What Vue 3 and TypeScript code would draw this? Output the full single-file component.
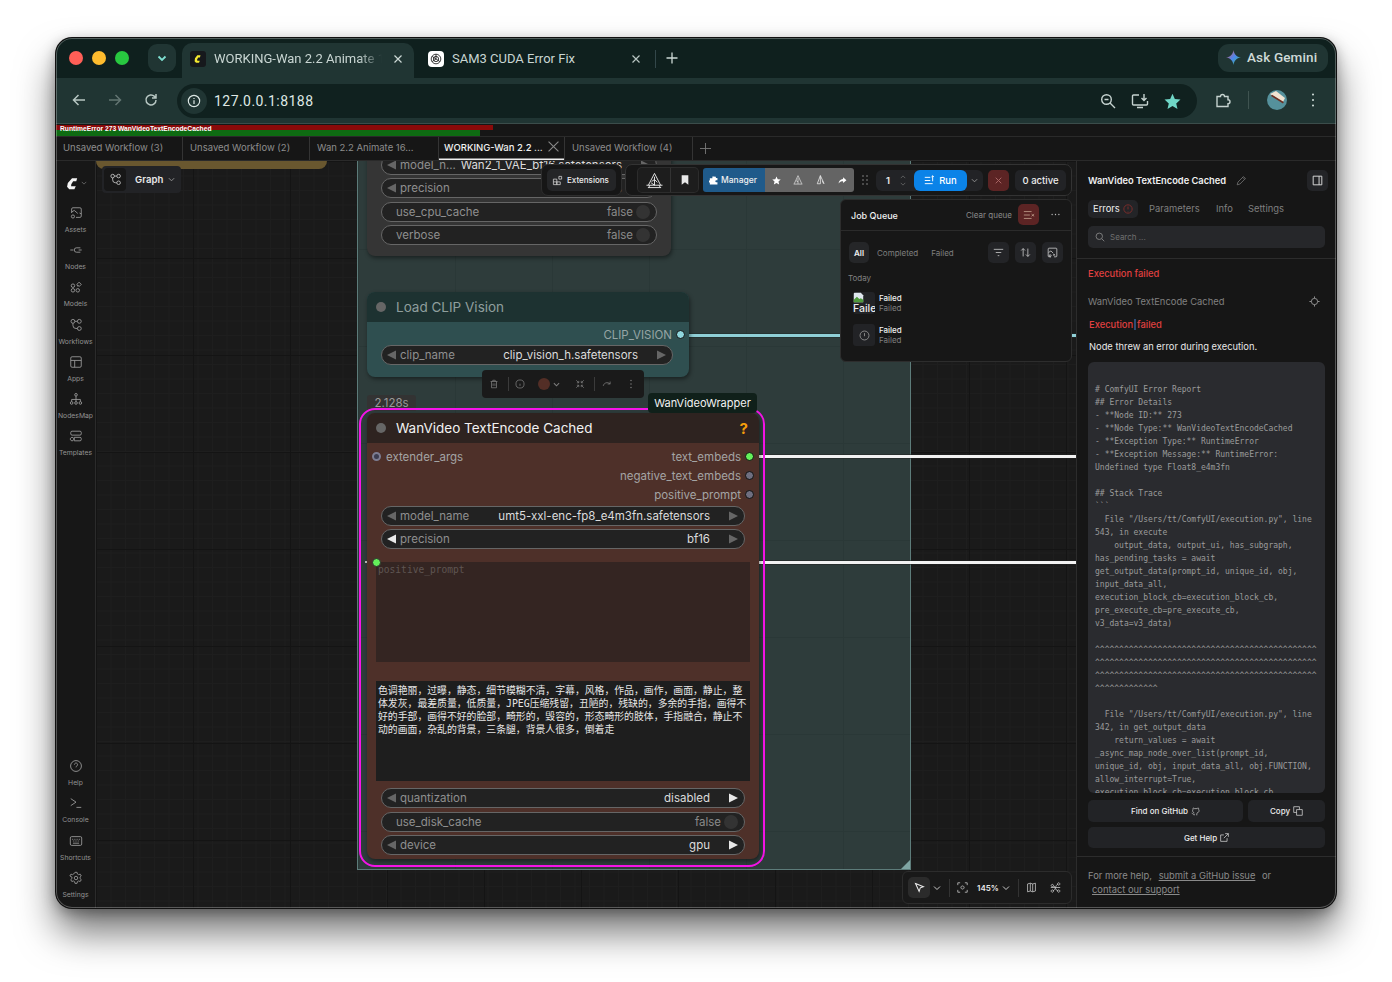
<script setup lang="ts">
interface Widget { label: string; value?: string; kind?: 'toggle'; lit?: 'l' | 'r' | 'both'; }
const circle = (x: number, y: number, r: number) => `M${x - r} ${y}a${r} ${r} 0 1 0 ${2 * r} 0a${r} ${r} 0 1 0 ${-2 * r} 0`;
const topItems = [
  { label: 'Assets', d: 'M3 8V3.5A1.5 1.5 0 0 1 4.5 2h8A1.5 1.5 0 0 1 14 3.5v8a1.5 1.5 0 0 1-1.500 1.500H8M3 7l3-2 4 3.500M14 9l-2-1M11 5.200h.01' + circle(4.5, 12, 1.8) },
  { label: 'Nodes', d: 'M1.500 8h3.500M11 8h3.500M13 5.500H8.500a2.500 2.500 0 0 0 0 5H13' },
  { label: 'Models', d: circle(4.5, 6.5, 2) + circle(4.5, 11.8, 2) + circle(10, 11.8, 2) + 'M11.500 2.500l2.500 2.500-2.500 2.500L9 5z' + circle(10, 6.5, .5) },
  { label: 'Workflows', d: circle(4.5, 3.8, 2.2) + circle(11.8, 3.8, 2.2) + circle(11.8, 12, 2.2) + 'M6.700 3.800h2.900M4.500 6v2.500a3.500 3.500 0 0 0 3.500 3.500h1.600' },
  { label: 'Apps', d: 'M3.500 2h9A1.500 1.500 0 0 1 14 3.500v9a1.500 1.500 0 0 1-1.500 1.500h-9A1.500 1.500 0 0 1 2 12.500v-9A1.500 1.500 0 0 1 3.500 2zM2 6.200h12M6.500 6.200V14' },
  { label: 'NodesMap', d: circle(8, 3.2, 1.5) + circle(3, 12.5, 1.5) + circle(8, 12.5, 1.5) + circle(13, 12.5, 1.5) + 'M8 4.700v6.300M3 11V8.500h10V11' },
  { label: 'Templates', d: 'M3.500 2.500h9A1.500 1.500 0 0 1 14 4v1.500A1.500 1.500 0 0 1 12.500 7h-9A1.500 1.500 0 0 1 2 5.500V4a1.500 1.500 0 0 1 1.500-1.500zM6 9.500h6.500A1.500 1.500 0 0 1 14 11v1a1.500 1.500 0 0 1-1.500 1.500H6zM3.500 9.500a2 2 0 1 0 .01 0' },
];
const bottomItems = [
  { label: 'Help', d: circle(8, 8, 6.2) + 'M6.200 6.400a1.800 1.800 0 1 1 2.800 1.500c-.7.500-1 .8-1 1.600M8 11.500h.01' },
  { label: 'Console', d: 'M2 3l6 4-6 4M8.500 13H14' },
  { label: 'Shortcuts', d: 'M3 3h10a1.500 1.500 0 0 1 1.500 1.500v7A1.500 1.500 0 0 1 13 13H3a1.500 1.500 0 0 1-1.500-1.500v-7A1.500 1.500 0 0 1 3 3zM4 5.500v1M6 5.500v1M8 5.500v1M10 5.500v1M12 5.500v1M5 7.500v1M7 7.500v1M9 7.500v1M11 7.500v1M4.500 10.500h7' },
  { label: 'Settings', d: circle(8, 8, 2) + 'M6.800 1.500h2.400l.4 1.900 1.400.8 1.800-.6 1.200 2.100-1.400 1.300v1.600l1.400 1.300-1.200 2.100-1.800-.6-1.400.8-.4 1.900H6.800l-.4-1.900-1.400-.8-1.800.6-1.200-2.100 1.400-1.300V7.000L1 5.700l1.200-2.100 1.800.6 1.400-.8z' },
];
const topNode: Widget[] = [
  { label: 'model_n...', value: 'Wan2_1_VAE_bf16.safetensors' },
  { label: 'precision', value: 's' },
  { label: 'use_cpu_cache', value: 'false', kind: 'toggle' },
  { label: 'verbose', value: 'false', kind: 'toggle' },
];
const encA: Widget[] = [
  { label: 'model_name', value: 'umt5-xxl-enc-fp8_e4m3fn.safetensors' },
  { label: 'precision', value: 'bf16', lit: 'l' },
];
const encB: Widget[] = [
  { label: 'quantization', value: 'disabled', lit: 'r' },
  { label: 'use_disk_cache', value: 'false', kind: 'toggle' },
  { label: 'device', value: 'gpu', lit: 'r' },
];
const negative = [
  '色调艳丽，过曝，静态，细节模糊不清，字幕，风格，作品，画作，画面，静止，整',
  '体发灰，最差质量，低质量，JPEG压缩残留，丑陋的，残缺的，多余的手指，画得不',
  '好的手部，画得不好的脸部，畸形的，毁容的，形态畸形的肢体，手指融合，静止不',
  '动的画面，杂乱的背景，三条腿，背景人很多，倒着走',
];
const wfTabs = ['Unsaved Workflow (3)', 'Unsaved Workflow (2)', 'Wan 2.2 Animate 16...', 'WORKING-Wan 2.2 ...', 'Unsaved Workflow (4)'];
const carets = '^'.repeat(46);
const report = `# ComfyUI Error Report
## Error Details
- **Node ID:** 273
- **Node Type:** WanVideoTextEncodeCached
- **Exception Type:** RuntimeError
- **Exception Message:** RuntimeError:
Undefined type Float8_e4m3fn

## Stack Trace
\`\`\`
  File "/Users/tt/ComfyUI/execution.py", line
543, in execute
    output_data, output_ui, has_subgraph,
has_pending_tasks = await
get_output_data(prompt_id, unique_id, obj,
input_data_all,
execution_block_cb=execution_block_cb,
pre_execute_cb=pre_execute_cb,
v3_data=v3_data)

${carets}
${carets}
${carets}
${'^'.repeat(13)}

  File "/Users/tt/ComfyUI/execution.py", line
342, in get_output_data
    return_values = await
_async_map_node_over_list(prompt_id,
unique_id, obj, input_data_all, obj.FUNCTION,
allow_interrupt=True,
execution_block_cb=execution_block_cb,`;
</script>

<template>
  <div class="page">
    <div class="window">
      <!-- browser tab strip -->
      <header class="strip">
        <div class="lights"><i class="red"></i><i class="yellow"></i><i class="green"></i></div>
        <button class="tabs-menu"><svg viewBox="0 0 12 12" width="12" height="12"><path d="M2.500 4.500L6 8l3.500-3.500" fill="none" stroke="#7fe0d2" stroke-width="1.800"/></svg></button>
        <div class="btab active">
          <span class="fav comfy"><svg viewBox="0 0 16 16" width="16" height="16"><path d="M10.500 4.200H7.300L5 7.300l-.4 2.900L6 11.800h3l.8-2H7.300l-.2-1.300 1.100-1.900h1.700z" fill="#f4e92f"/></svg></span>
          <span class="btitle fade">WORKING-Wan 2.2 Animate 1</span>
          <svg class="bx" viewBox="0 0 10 10" width="10" height="10"><path d="M1.500 1.500l7 7M8.500 1.500l-7 7" stroke="#cdd9d6" stroke-width="1.200"/></svg>
        </div>
        <div class="btab second">
          <span class="fav gpt"><svg viewBox="0 0 16 16" width="14" height="14"><g fill="none" stroke="#222" stroke-width="1"><circle cx="8" cy="8" r="5.500"/><circle cx="8" cy="8" r="3"/><path d="M8 2.500v5.500l4.500 3M3.500 11L8 8M3.500 5l4.500 3"/></g></svg></span>
          <span class="btitle">SAM3 CUDA Error Fix</span>
          <svg class="bx" viewBox="0 0 10 10" width="10" height="10"><path d="M1.500 1.500l7 7M8.500 1.500l-7 7" stroke="#b7c4c1" stroke-width="1.200"/></svg>
        </div>
        <span class="bsep"></span>
        <svg class="bplus" viewBox="0 0 12 12" width="12" height="12"><path d="M6 .5v11M.5 6h11" stroke="#cdd9d6" stroke-width="1.300"/></svg>
        <div class="gemini">
          <svg viewBox="0 0 16 16" width="15" height="15"><defs><linearGradient id="gm" x1="0" y1="0" x2="1" y2="1"><stop offset="0" stop-color="#f0503c"/><stop offset=".5" stop-color="#4d86f0"/><stop offset="1" stop-color="#33c06a"/></linearGradient></defs><path d="M8 0c.6 4.400 3.100 7.300 8 8-4.900.7-7.400 3.600-8 8-.6-4.400-3.100-7.300-8-8 4.900-.7 7.400-3.600 8-8z" fill="url(#gm)"/></svg>
          <span>Ask Gemini</span>
        </div>
      </header>

      <!-- browser toolbar -->
      <div class="toolbar">
        <svg class="nav" viewBox="0 0 16 16"><path d="M14 8H2.500M7.500 3l-5 5 5 5" fill="none" stroke="#b6c6c2" stroke-width="1.500"/></svg>
        <svg class="nav" viewBox="0 0 16 16"><path d="M2 8h11.500M8.500 3l5 5-5 5" fill="none" stroke="#627572" stroke-width="1.500"/></svg>
        <svg class="nav" viewBox="0 0 16 16"><path d="M13 8a5 5 0 1 1-1.500-3.600L13 6M13 2v4H9" fill="none" stroke="#b6c6c2" stroke-width="1.500"/></svg>
        <div class="omni">
          <span class="info"><svg viewBox="0 0 16 16" width="14" height="14"><circle cx="8" cy="8" r="6.500" fill="none" stroke="#dbe6e3" stroke-width="1.300"/><path d="M8 7v4.500M8 4.500v1.200" stroke="#dbe6e3" stroke-width="1.400"/></svg></span>
          <span class="url">127.0.0.1:8188</span>
          <span class="omni-r">
            <svg viewBox="0 0 16 16" width="16" height="16"><circle cx="6.500" cy="6.500" r="4.800" fill="none" stroke="#c5d2cf" stroke-width="1.400"/><path d="M10 10l5 5M4.500 6.500h4" stroke="#c5d2cf" stroke-width="1.400"/></svg>
            <svg viewBox="0 0 18 16" width="18" height="16"><path d="M8 2H2.500A1 1 0 0 0 1.500 3v8a1 1 0 0 0 1 1h13a1 1 0 0 0 1-1V8M6 14.500h6M13 1v6M10.500 5l2.500 2.500L15.500 5" fill="none" stroke="#c5d2cf" stroke-width="1.400"/></svg>
            <svg viewBox="0 0 16 16" width="17" height="17"><path d="M8 .8l2.200 4.900 5.300.5-4 3.600 1.200 5.300L8 12.300l-4.700 2.800 1.200-5.300-4-3.600 5.300-.5z" fill="#6fd6c6"/></svg>
          </span>
        </div>
        <svg class="ext" viewBox="0 0 16 16" width="16" height="16"><path d="M2 4.500h3.500a2 2 0 1 1 4 0H13v3.200a2 2 0 1 1 0 4V14.500H2z" fill="none" stroke="#c5d2cf" stroke-width="1.400"/></svg>
        <span class="tsep"></span>
        <svg class="avatar" viewBox="0 0 20 20" width="20" height="20"><circle cx="10" cy="10" r="10" fill="#55919c"/><path d="M3 4l13 8 2-4L9 1z" fill="#f0e3d2"/><path d="M4 6l12 7.500 .8-1.500L5 4.800z" fill="#6d2f22"/></svg>
        <svg class="dots" viewBox="0 0 4 14" width="4" height="14"><path d="M2 1.500h.01M2 7h.01M2 12.500h.01" stroke="#c5d2cf" stroke-width="2.200" stroke-linecap="round"/></svg>
      </div>

      <!-- progress -->
      <div class="progress">
        <div class="bar-r"></div>
        <div class="bar-g"></div>
        <span class="ptext">RuntimeError 273 WanVideoTextEncodeCached</span>
      </div>

      <!-- workflow tabs -->
      <nav class="wftabs">
        <div v-for="(t, i) in wfTabs" :key="t" class="wftab" :class="{ on: i === 3 }">
          <span>{{ t }}</span>
          <svg v-if="i === 3" viewBox="0 0 10 10" width="11" height="11"><path d="M.5.500l9 9M9.500.500l-9 9" stroke="#888" stroke-width="1"/></svg>
        </div>
        <svg class="wfplus" viewBox="0 0 12 12" width="11" height="11"><path d="M6 0v12M0 6h12" stroke="#777" stroke-width="1"/></svg>
      </nav>

      <div class="main">
        <!-- left rail -->
        <aside class="rail">
          <div class="logo">
            <svg viewBox="0 0 16 16" width="15" height="15"><path d="M13 2.500H7.500L3 7.500 2.200 11.500 4.500 14H10l1.500-3H6.500l.2-2.300L8.700 5.500H12z" fill="#f4f4f4"/></svg>
            <svg viewBox="0 0 8 8" width="6" height="6"><path d="M1 2.500l3 3 3-3" fill="none" stroke="#777" stroke-width="1"/></svg>
          </div>
          <div v-for="it in topItems" :key="it.label" class="ritem">
            <svg viewBox="0 0 16 16" width="14" height="14"><path :d="it.d"/></svg>
            <span>{{ it.label }}</span>
          </div>
          <div class="rspace"></div>
          <div v-for="it in bottomItems" :key="it.label" class="ritem">
            <svg viewBox="0 0 16 16" width="14" height="14"><path :d="it.d"/></svg>
            <span>{{ it.label }}</span>
          </div>
        </aside>

        <!-- canvas -->
        <section class="canvas">
          <div class="ygroup"></div>
          <div class="group"><i class="grip"></i></div>

          <div class="wire teal"></div>
          <div class="wire white w1"></div>
          <div class="wire white w2"></div>

          <!-- cut-off node -->
          <div class="node n-top">
            <div v-for="w in topNode" :key="w.label" class="wg" :class="{ tg: w.kind === 'toggle' }">
              <svg v-if="w.kind !== 'toggle'" class="ar" viewBox="0 0 10 10"><path d="M9 .5v9L0 5z"/></svg>
              <span class="wl">{{ w.label }}</span>
              <span class="wv">{{ w.value }}</span>
              <i v-if="w.kind === 'toggle'" class="knob"></i>
              <svg v-else class="ar" viewBox="0 0 10 10"><path d="M1 .5v9L10 5z"/></svg>
            </div>
          </div>

          <!-- clip vision -->
          <div class="node n-clip">
            <div class="ntitle clip-t"><i class="tdot"></i><span>Load CLIP Vision</span></div>
            <div class="clip-b">
              <div class="slot r"><span>CLIP_VISION</span><i class="pin cv"></i></div>
              <div class="wg">
                <svg class="ar" viewBox="0 0 10 10"><path d="M9 .5v9L0 5z"/></svg>
                <span class="wl">clip_name</span>
                <span class="wv">clip_vision_h.safetensors</span>
                <svg class="ar" viewBox="0 0 10 10"><path d="M1 .5v9L10 5z"/></svg>
              </div>
            </div>
          </div>

          <div class="selbox">
            <svg class="s1" viewBox="0 0 16 16" width="10" height="10"><path d="M2.500 4h11M6 4V2h4v2M4 4v10h8V4M6.500 7v4M9.500 7v4"/></svg>
            <b class="s2"></b>
            <svg class="s3" viewBox="0 0 16 16" width="10" height="10"><path :d="circle(8, 8, 6.500) + 'M8 7.500v3.500M8 5h.01'"/></svg>
            <span class="sw"></span>
            <svg class="chev s4" viewBox="0 0 8 8" width="7" height="7"><path d="M1 2.500l3 3 3-3"/></svg>
            <svg class="s5" viewBox="0 0 16 16" width="10" height="10"><path d="M2 2l4 4M6 3v3H3M14 2l-4 4M10 3v3h3M2 14l4-4M6 13v-3H3M14 14l-4-4M10 13v-3h3"/></svg>
            <b class="s2"></b>
            <svg class="s6" viewBox="0 0 16 16" width="10" height="10"><path d="M2 11c1-5 7-7 11-3M13 4v4H9M5 12h.01"/></svg>
            <svg class="s7" viewBox="0 0 4 14" width="4" height="10"><path d="M2 2h.01M2 7h.01M2 12h.01" stroke-width="2" stroke-linecap="round"/></svg>
          </div>

          <!-- selected node -->
          <div class="time">2.128s</div>
          <div class="magenta"></div>
          <div class="wrapper-tag">WanVideoWrapper</div>
          <div class="node n-enc">
            <div class="ntitle enc-t"><i class="tdot"></i><span>WanVideo TextEncode Cached</span><em>?</em></div>
            <div class="enc-b">
              <div class="slot l"><i class="pin hollow"></i><span>extender_args</span></div>
              <div class="slot r up"><span>text_embeds</span><i class="pin go"></i></div>
              <div class="slot r"><span>negative_text_embeds</span><i class="pin off"></i></div>
              <div class="slot r"><span>positive_prompt</span><i class="pin off"></i></div>
              <div class="wlist">
                <div v-for="w in encA" :key="w.label" class="wg">
                  <svg class="ar" :class="{ lit: w.lit === 'l' }" viewBox="0 0 10 10"><path d="M9 .5v9L0 5z"/></svg>
                  <span class="wl">{{ w.label }}</span>
                  <span class="wv">{{ w.value }}</span>
                  <svg class="ar" viewBox="0 0 10 10"><path d="M1 .5v9L10 5z"/></svg>
                </div>
              </div>
              <div class="ta ta1">
                <i class="pin go tapin"></i><i class="tiny"></i>
                <span class="ph">positive_prompt</span>
              </div>
              <div class="ta ta2"><div v-for="l in negative" :key="l">{{ l }}</div></div>
              <div class="wlist low">
                <div v-for="w in encB" :key="w.label" class="wg" :class="{ tg: w.kind === 'toggle' }">
                  <svg v-if="w.kind !== 'toggle'" class="ar" viewBox="0 0 10 10"><path d="M9 .5v9L0 5z"/></svg>
                  <span class="wl">{{ w.label }}</span>
                  <span class="wv" :class="{ dim: w.kind === 'toggle' }">{{ w.value }}</span>
                  <i v-if="w.kind === 'toggle'" class="knob"></i>
                  <svg v-else class="ar" :class="{ lit: w.lit === 'r' }" viewBox="0 0 10 10"><path d="M1 .5v9L10 5z"/></svg>
                </div>
              </div>
            </div>
          </div>

          <!-- graph pill -->
          <div class="graph">
            <span class="gicon"><svg viewBox="0 0 16 16" width="13" height="13"><path :d="circle(4.5, 3.8, 2.2) + circle(11.8, 3.8, 2.200) + circle(11.8, 12, 2.200) + 'M6.700 3.800h2.900M4.500 6v2.500a3.500 3.500 0 0 0 3.500 3.500h1.600'"/></svg></span>
            <span class="gtxt">Graph</span>
            <svg class="chev" viewBox="0 0 8 8" width="7" height="7"><path d="M1 2.500l3 3 3-3"/></svg>
          </div>

          <!-- top toolbars -->
          <div class="topbars">
            <div class="extbox">
              <span class="extbtn">
                <svg viewBox="0 0 16 16" width="11" height="11"><path d="M2 6h5v8H2zM2 10h5M7 10h5v4H7zM10 2h4v4h-4z"/></svg>
                Extensions
              </span>
            </div>
            <div class="actions">
              <div class="ibtns">
                <span class="ib wide"><svg viewBox="0 0 20 18" width="19" height="17"><path d="M10 1.500L3.500 14M10 1.500L16.500 14M1.500 14h17M10 5v9M7 10l3-2 3 3M6.500 11.500l3.500 2.500M3 16.500h14M5 14l-1 2.500M15 14l1 2.500" fill="none" stroke="#e8e8e8" stroke-width="1"/></svg></span>
                <span class="ib"><svg viewBox="0 0 12 14" width="8" height="10"><path d="M1 0h10v14l-5-3.500L1 14z" fill="#e8e8e8"/></svg></span>
              </div>
              <div class="mgr">
                <svg viewBox="0 0 16 16" width="9" height="9"><path d="M6 1h3.500v2.500a1.500 1.500 0 1 1 2.500 0H15v4h-1.500a1.800 1.800 0 1 0 0 3.500H15V15H1.500v-3.500a1.800 1.800 0 1 1 0-3.500V4H6z" fill="#fff"/></svg>
                Manager
              </div>
              <div class="mgr-more">
                <svg viewBox="0 0 16 16" width="9" height="9"><path d="M8 .8l2.200 4.900 5.300.5-4 3.600 1.200 5.300L8 12.300l-4.700 2.800 1.200-5.300-4-3.600 5.300-.5z" fill="#fff"/></svg>
                <svg viewBox="0 0 16 16" width="10" height="10"><path d="M8 1L2 14M8 1l6 13M8 5v9M5 9l3 2M1 14.500h14" fill="none" stroke="#e8e8e8" stroke-width="1.100"/></svg>
                <svg viewBox="0 0 16 16" width="10" height="10"><path d="M7 1L2 14h5zM7 1l6 13M10 9l2 5" fill="none" stroke="#e8e8e8" stroke-width="1.300"/></svg>
                <svg viewBox="0 0 16 16" width="9" height="9"><path d="M9 2l6 5.500L9 12.500V9.500c-3.500 0-6 1-8 4 .5-4.500 3-7.500 8-8z" fill="#fff"/></svg>
              </div>
              <svg class="drag" viewBox="0 0 8 12" width="8" height="12"><path d="M2 2h.01M6 2h.01M2 6h.01M6 6h.01M2 10h.01M6 10h.01" stroke="#aaa" stroke-width="1.300" stroke-linecap="round"/></svg>
              <div class="runwrap">
                <span class="qty">1</span>
                <span class="steppers">
                  <svg viewBox="0 0 8 5" width="6" height="4"><path d="M1 4l3-3 3 3"/></svg>
                  <svg viewBox="0 0 8 5" width="6" height="4"><path d="M1 1l3 3 3-3"/></svg>
                </span>
                <span class="run">
                  <svg viewBox="0 0 14 14" width="11" height="11"><path d="M1 3h7M1 7h7M1 11h10M11 1v7M9.500 2.500L11 1l1.500 1.500" fill="none" stroke="#fff" stroke-width="1.200"/></svg>
                  Run
                </span>
                <svg class="chev runchev" viewBox="0 0 8 8" width="7" height="7"><path d="M1 2.500l3 3 3-3"/></svg>
              </div>
              <span class="xbtn"><svg viewBox="0 0 10 10" width="7" height="7"><path d="M1 1l8 8M9 1l-8 8" stroke="#a66" stroke-width="1.400"/></svg></span>
              <span class="active-n">0 active</span>
            </div>
          </div>

          <!-- job queue -->
          <div class="queue">
            <div class="q-head">
              <span class="q-title">Job Queue</span>
              <span class="q-clear">Clear queue</span>
              <span class="q-red"><svg viewBox="0 0 14 14" width="12" height="12"><path d="M1 3h9M1 7h7M1 11h9M10 6l3 2.500M13 6l-3 2.500" fill="none" stroke="#b98" stroke-width="1"/></svg></span>
              <svg class="q-more" viewBox="0 0 12 4" width="9" height="3"><path d="M1.500 2h.01M6 2h.01M10.500 2h.01" stroke="#bbb" stroke-width="1.800" stroke-linecap="round"/></svg>
            </div>
            <div class="q-filter">
              <span class="qf on">All</span>
              <span class="qf">Completed</span>
              <span class="qf">Failed</span>
              <span class="qspace"></span>
              <span class="qi"><svg viewBox="0 0 14 14" width="11" height="11"><path d="M1 3h12M3.500 7h7M6 11h2"/></svg></span>
              <span class="qi"><svg viewBox="0 0 14 14" width="11" height="11"><path d="M4 12V2M1.500 4.500L4 2l2.500 2.500M10 2v10M7.500 9.500L10 12l2.500-2.500"/></svg></span>
              <span class="qi"><svg viewBox="0 0 14 14" width="11" height="11"><path d="M5 12.500H2.500A1 1 0 0 1 1.500 11.500V2.500A1 1 0 0 1 2.500 1.500h9a1 1 0 0 1 1 1v9a1 1 0 0 1-1 1H9M2 7l3-2 3 3M9.500 4.500h.01M4 10a1.200 1.200 0 1 0 .01 0M8 9l2 2M10 9l-2 2"/></svg></span>
            </div>
            <div class="q-day">Today</div>
            <div class="q-item">
              <span class="q-thumb">
                <svg class="broken" viewBox="0 0 14 14" width="11" height="11"><path d="M1 1h9l3 3v9H1z" fill="#dfe6ee"/><path d="M1 10l4-4 3 3 2-1 3 2v3H1z" fill="#4f9a3c"/></svg>
                <span class="faile">Failed</span>
              </span>
              <span class="q-txt"><b>Failed</b><small>Failed</small></span>
            </div>
            <div class="q-item">
              <span class="q-thumb alt"><svg viewBox="0 0 16 16" width="11" height="11"><path :d="circle(8, 8, 6.500) + 'M8 4.500v4.500M8 11h.01'" fill="none" stroke="#999" stroke-width="1.200"/></svg></span>
              <span class="q-txt"><b>Failed</b><small>Failed</small></span>
            </div>
          </div>

          <!-- canvas controls -->
          <div class="ctl">
            <span class="ptr"><svg viewBox="0 0 14 14" width="11" height="11"><path d="M2 2l10 4-4 1.500L6.500 12z" fill="none" stroke="#eee" stroke-width="1.300"/></svg></span>
            <svg class="chev c1" viewBox="0 0 8 8" width="8" height="8"><path d="M1 2.500l3 3 3-3"/></svg>
            <b></b>
            <svg class="c2" viewBox="0 0 14 14" width="11" height="11"><path d="M1 4V1h3M10 1h3v3M13 10v3h-3M4 13H1v-3M7 5a2 2 0 1 0 .01 0"/></svg>
            <span class="pct">145%</span>
            <svg class="chev" viewBox="0 0 8 8" width="8" height="8"><path d="M1 2.500l3 3 3-3"/></svg>
            <b></b>
            <svg class="c3" viewBox="0 0 14 14" width="11" height="11"><path d="M2 2.500l3.500-1 3 1 3.500-1v10l-3.500 1-3-1-3.500 1zM5.500 1.500v10M8.500 2.500v10"/></svg>
            <svg class="c4" viewBox="0 0 14 14" width="11" height="11"><path d="M3 3a1.500 1.500 0 1 0 .01 0M11 1a1.500 1.500 0 1 0 .01 0M3 10a1.500 1.500 0 1 0 .01 0M11 10a1.500 1.500 0 1 0 .01 0M4 5c4 0 2 6 6 6M4 11c3 0 3-8 6-8M1 7h12"/></svg>
          </div>
        </section>

        <!-- right panel -->
        <aside class="panel">
          <div class="p-head">
            <strong>WanVideo TextEncode Cached</strong>
            <svg viewBox="0 0 14 14" width="11" height="11"><path d="M1.500 12.500l1-3.500 7-7 2.500 2.500-7 7zM8.500 3l2.500 2.500" fill="none" stroke="#777" stroke-width="1"/></svg>
            <span class="p-toggle"><svg viewBox="0 0 14 14" width="11" height="11"><path d="M1.500 1.500h11v11h-11zM9 1.500v11" fill="none" stroke="#ddd" stroke-width="1.200"/></svg></span>
          </div>
          <div class="p-tabs">
            <span class="pt on">Errors
              <svg viewBox="0 0 12 12" width="10" height="10"><circle cx="6" cy="6" r="5" fill="none" stroke="#8a2f2c" stroke-width="1"/><path d="M6 3v3.500M6 8.500v.5" stroke="#8a2f2c" stroke-width="1"/></svg>
            </span>
            <span class="pt p1">Parameters</span>
            <span class="pt p2">Info</span>
            <span class="pt p3">Settings</span>
          </div>
          <div class="p-search">
            <svg viewBox="0 0 14 14" width="10" height="10"><circle cx="6" cy="6" r="4.500" fill="none" stroke="#888" stroke-width="1.200"/><path d="M9.500 9.500l3.500 3.500" stroke="#888" stroke-width="1.200"/></svg>
            <span>Search ...</span>
          </div>
          <div class="p-div"></div>
          <div class="p-err a">Execution failed</div>
          <div class="p-nodename">
            <span>WanVideo TextEncode Cached</span>
            <svg viewBox="0 0 14 14" width="11" height="11"><circle cx="7" cy="7" r="4" fill="none" stroke="#aaa" stroke-width="1"/><path d="M7 0.500v2.500M7 11v2.500M.5 7H3M11 7h2.500" stroke="#aaa" stroke-width="1"/></svg>
          </div>
          <div class="p-err b"><span>Execution</span><i class="caret"></i><span>failed</span></div>
          <div class="p-msg">Node threw an error during execution.</div>
          <pre class="p-code">{{ report }}</pre>
          <div class="p-btns">
            <span class="pb grow">Find on GitHub
              <svg viewBox="0 0 14 14" width="9" height="9"><path d="M5 13v-2c-2 .5-3-.5-3.500-2M9 13v-2.500c0-1 .5-1 1-1.500 2-.5 2.500-2 2.500-3.500 0-1-.3-1.500-.8-2 .2-.7.2-1.500-.2-2-.7 0-1.500.5-2 1H5.500c-.5-.5-1.300-1-2-1-.4.500-.4 1.300-.2 2-.5.500-.8 1-.8 2 0 1.500.5 3 2.500 3.500" fill="none" stroke="#ddd" stroke-width="1"/></svg>
            </span>
            <span class="pb copy">Copy
              <svg viewBox="0 0 14 14" width="10" height="10"><path d="M5 5h8v8H5zM9 5V1H1v8h4" fill="none" stroke="#ddd" stroke-width="1"/></svg>
            </span>
          </div>
          <span class="pb help">Get Help
            <svg viewBox="0 0 14 14" width="9" height="9"><path d="M11 8v5H1V3h5M8 1h5v5M13 1L6 8" fill="none" stroke="#ddd" stroke-width="1.100"/></svg>
          </span>
          <div class="p-div low"></div>
          <div class="p-foot">
            <div>For more help, <u class="u1">submit a GitHub issue</u> <span class="or">or</span></div>
            <div><u class="u2">contact our support</u></div>
          </div>
        </aside>
      </div>
    </div>
  </div>
</template>

<style>
html, body { margin: 0; background: #fff; }
</style>

<style scoped>
* { box-sizing: border-box; }
.page { width: 1392px; height: 982px; padding: 38px 56px 74px; overflow: hidden; background: #fff; font-family: Inter, "Noto Sans CJK SC", sans-serif; }
.window { width: 1280px; height: 870px; border-radius: 16px; overflow: hidden; display: flex; flex-direction: column; background: #161616; box-shadow: 0 0 0 1px #111, 0 24px 38px rgba(0,0,0,.55), 0 4px 14px rgba(0,0,0,.35); position: relative; }
.window::after { content: ""; position: absolute; inset: 0; border-radius: 16px; box-shadow: inset 0 0 0 1px rgba(255,255,255,.28); pointer-events: none; z-index: 50; }

/* browser strip */
.strip { height: 40px; flex: none; background: #0f201e; position: relative; display: flex; align-items: flex-end; font-family: Roboto, sans-serif; }
.lights { display: flex; gap: 9px; position: absolute; left: 13px; top: 13px; }
.lights i { width: 14px; height: 14px; border-radius: 50%; display: block; }
.red { background: #ff5f57; } .yellow { background: #febc2e; } .green { background: #28c840; }
.tabs-menu { position: absolute; left: 92px; top: 6px; width: 28px; height: 28px; border-radius: 9px; border: 0; background: #203533; display: flex; align-items: center; justify-content: center; padding: 0; }
.btab { position: absolute; bottom: 0; height: 35px; display: flex; align-items: center; padding-bottom: 4px; }
.btab.active { left: 126px; width: 232px; background: #203533; border-radius: 10px 10px 0 0; padding-left: 8px; }
.btab.second { left: 364px; width: 232px; padding-left: 8px; }
.fav { width: 16px; height: 16px; flex: none; border-radius: 3px; display: flex; align-items: center; justify-content: center; }
.comfy { background: #16181c; }
.gpt { background: #fff; border-radius: 4px; }
.btitle { margin-left: 8px; font-size: 13px; color: #c9d6d3; white-space: nowrap; width: 172px; overflow: hidden; }
.fade { width: 168px; -webkit-mask-image: linear-gradient(90deg, #000 86%, transparent); mask-image: linear-gradient(90deg, #000 86%, transparent); }
.btab .bx { position: absolute; right: 11px; top: 11px; }
.bsep { position: absolute; left: 599px; top: 12px; width: 1px; height: 18px; background: #33474a; }
.bplus { position: absolute; left: 610px; top: 14px; }
.gemini { position: absolute; left: 1162px; top: 6px; width: 110px; height: 28px; border-radius: 11px; background: #203533; display: flex; align-items: center; gap: 6px; padding: 0 0 2px 8px; font-size: 13.500px; font-weight: 500; color: #cfdad7; letter-spacing: .15px; white-space: nowrap; }

/* toolbar */
.toolbar { height: 46px; flex: none; background: #203533; border-bottom: 1px solid #3b4d4b; display: flex; align-items: center; position: relative; padding-bottom: 1px; }
.nav { width: 16px; height: 16px; margin-left: 20px; flex: none; }
.nav:first-child { margin-left: 15px; }
.omni { position: absolute; left: 121px; top: 6px; width: 1020px; height: 34px; border-radius: 17px; background: #10211f; display: flex; align-items: center; font-family: Roboto, sans-serif; }
.info { width: 26px; height: 26px; margin-left: 4px; border-radius: 50%; background: #203533; display: flex; align-items: center; justify-content: center; }
.url { margin-left: 7px; font-size: 14px; color: #dfe8e5; letter-spacing: .45px; }
.omni-r { margin-left: auto; margin-right: 16px; display: flex; gap: 15px; align-items: center; }
.ext { position: absolute; left: 1159px; top: 14px; }
.tsep { position: absolute; left: 1192px; top: 13px; width: 1px; height: 18px; background: #3f5350; }
.avatar { position: absolute; left: 1211px; top: 12px; }
.dots { position: absolute; left: 1255px; top: 15px; }

/* progress */
.progress { height: 12px; flex: none; background: #161616; position: relative; }
.bar-r { position: absolute; left: 0; top: 1px; width: 437px; height: 5px; background: #8a0a0a; }
.bar-g { position: absolute; left: 0; top: 6px; width: 424px; height: 6px; background: #0e6b12; }
.ptext { position: absolute; left: 4px; top: 0; font: 700 6.700px/10px "Liberation Sans", sans-serif; color: #fff; white-space: nowrap; }

/* workflow tabs */
.wftabs { height: 25px; flex: none; display: flex; align-items: stretch; background: #161616; border-top: 1px solid #2a2a2a; border-bottom: 1px solid #2a2a2a; position: relative; }
.wftab { display: flex; align-items: center; font-size: 9.500px; color: #8d8d8d; border-right: 1px solid #343434; padding: 0 0 2px 7px; width: 127px; flex: none; white-space: nowrap; position: relative; }
.wftab:nth-child(3) { width: 129px; }
.wftab:nth-child(4) { width: 126px; padding-left: 5px; }
.wftab:nth-child(5) { width: 128px; }
.wftab.on { color: #f2f2f2; font-weight: 500; box-shadow: inset 0 -1.500px 0 #eee; }
.wftab svg { position: absolute; right: 5px; top: 4px; }
.wfplus { margin-left: 7px; align-self: center; }

/* main */
.main { flex: 1; display: flex; min-height: 0; }
.rail { width: 40px; flex: none; background: #171717; border-right: 1px solid #2b2b2b; display: flex; flex-direction: column; align-items: center; padding-bottom: 1px; }
.logo { height: 44px; width: 100%; display: flex; align-items: center; justify-content: center; gap: 1px; flex: none; }
.ritem { height: 37.200px; flex: none; width: 100%; display: flex; flex-direction: column; align-items: center; justify-content: flex-start; gap: 5px; padding-top: 1px; }
.ritem svg { fill: none; stroke: #9a9a9a; stroke-width: 1; flex: none; }
.ritem span { font-size: 6.800px; line-height: 9px; color: #929292; white-space: nowrap; }
.rspace { flex: 1; }

.canvas { width: 980px; flex: none; position: relative; overflow: hidden; background-color: #1a1a1a;
  background-image:
    linear-gradient(#141414 1px, transparent 1px), linear-gradient(90deg, #141414 1px, transparent 1px),
    linear-gradient(#1e1e1e 1px, transparent 1px), linear-gradient(90deg, #1e1e1e 1px, transparent 1px);
  background-size: 97px 97px, 97px 97px, 14.500px 14.500px, 14.500px 14.500px; }
.ygroup { position: absolute; left: 0; top: -10px; width: 231px; height: 18px; background: #69572f; border-radius: 0 0 8px 8px; }
.group { position: absolute; left: 261px; top: -10px; width: 554px; height: 719px; background-color: #2e3c3b; border: 1px solid #5d7c7a;
  background-image: linear-gradient(#2a3837 1px, transparent 1px), linear-gradient(90deg, #2a3837 1px, transparent 1px); background-size: 97px 97px; }
.grip { position: absolute; right: 0; bottom: 0; width: 0; height: 0; border-left: 9px solid transparent; border-bottom: 9px solid #7fa5a3; }

.wire { position: absolute; }
.wire.teal { left: 593px; top: 172.500px; width: 387px; height: 3px; background: #8fcfd6; box-shadow: 0 0 0 .5px #1d2a2a; }
.wire.white { left: 662px; width: 318px; height: 3px; background: #f2f2f2; box-shadow: 0 0 0 .5px #222; }
.w1 { top: 293.500px; } .w2 { top: 399.500px; }

.node { position: absolute; border-radius: 8px; box-shadow: 1px 2px 4px rgba(0,0,0,.45); }
.n-top { left: 271px; top: -30px; width: 304px; height: 125px; background: #353535; padding: 4px 14px 11px; display: flex; flex-direction: column; justify-content: flex-end; gap: 3.500px; }
.n-clip { left: 271px; top: 131px; width: 322px; height: 85px; background: #2f4f50; overflow: hidden; }
.ntitle { height: 30px; display: flex; align-items: center; font-size: 13.500px; }
.clip-t { background: #1d3231; color: #8f9e9d; }
.tdot { width: 10px; height: 10px; border-radius: 50%; background: #666; margin: 0 10px 0 9px; flex: none; }
.clip-b { padding: 3px 16px 0 14px; }
.clip-b .wg { margin-top: 1px; }
.slot { height: 19px; display: flex; align-items: center; font-size: 11.500px; color: #a4a4a4; position: relative; white-space: nowrap; }
.slot.r { justify-content: flex-end; }
.clip-b .slot { margin-right: -12px; color: #96a5a5; }
.slot.r span { margin-right: 4px; }
.slot.l { margin-bottom: -19px; }
.slot.l span { margin-left: 5px; }
.pin { width: 9px; height: 9px; border-radius: 50%; display: block; flex: none; border: 1px solid #111; }
.pin.cv { background: #8fd6dd; }
.pin.go { background: #64f05a; }
.pin.off { background: #6f6f80; }
.pin.hollow { background: #3c3c50; border: 2px solid #7d7d92; }

.wg { height: 20px; border-radius: 10px; border: 1px solid #666; background: #222; display: flex; align-items: center; padding: 0 6px 0 5px; font-size: 11.500px; white-space: nowrap; flex: none; }
.wg.tg { padding: 0 6px 0 14px; }
.wl { color: #8f8f8f; margin-left: 3px; }
.tg .wl { margin-left: 0; }
.wv { margin-left: auto; color: #dcdcdc; margin-right: 18px; }
.tg .wv, .wv.dim { color: #8a8a8a; margin-right: 3px; }
.knob { width: 14px; height: 14px; border-radius: 50%; background: #333; display: block; flex: none; }
.ar { width: 10px; height: 10px; fill: #666; flex: none; }
.ar.lit { fill: #e8e8e8; }

.selbox { position: absolute; left: 386px; top: 209px; width: 162px; height: 28px; background: #1a1a1a; border-radius: 4px; display: flex; align-items: center; padding-left: 7px; }
.selbox svg { fill: none; stroke: #7d7d7d; stroke-width: 1.200; flex: none; }
.selbox b { width: 1px; height: 14px; background: #3b3b3b; display: block; flex: none; }
.s2 { margin-left: 9px; }
.s3 { margin-left: 6px; }
.sw { width: 12px; height: 12px; border-radius: 50%; background: #532e26; margin-left: 13px; flex: none; }
.s4 { margin-left: 3px; }
.s5 { margin-left: 15px; }
.s6 { margin-left: 7px; }
.s7 { margin-left: 17px; }
.chev { fill: none; stroke: #9a9a9a; stroke-width: 1; flex: none; }

.time { position: absolute; left: 271px; top: 234px; width: 49px; height: 16px; background: #333; border-radius: 3px 3px 0 0; color: #9a9a9a; font-size: 11.500px; text-align: center; line-height: 17px; }
.magenta { position: absolute; left: 263px; top: 247px; width: 406px; height: 459px; border: 2.500px solid #f514e8; border-radius: 16px; }
.wrapper-tag { position: absolute; left: 552px; top: 232px; width: 109px; height: 20px; background: #10201a; border-radius: 4px; color: #f2f2f2; font-size: 11px; line-height: 20px; text-align: center; white-space: nowrap; z-index: 3; }
.n-enc { left: 271px; top: 252px; width: 392px; height: 446px; background: #4e3029; display: flex; flex-direction: column; }
.enc-t { background: #2e2320; color: #f2f2f2; height: 30px; border-radius: 8px 8px 0 0; flex: none; }
.enc-t em { margin-left: auto; margin-right: 11px; color: #f59e0b; font-style: normal; font-weight: 700; font-size: 15px; }
.enc-b { padding: 4px 5px 0 5px; position: relative; }
.wlist { display: flex; flex-direction: column; gap: 3.500px; margin: 1.500px 9px 0; }
.ta { position: absolute; left: 9px; width: 374px; height: 100px; font-family: "DejaVu Sans Mono", "Noto Sans CJK SC", monospace; font-size: 9.850px; }
.ta1 { top: 119px; background: #342522; }
.ph { position: absolute; left: 2px; top: 2px; color: #5f5552; font-size: 9.600px; line-height: 12px; white-space: nowrap; }
.tapin { position: absolute; left: -4px; top: -4px; border-color: #2c2c2c; }
.tiny { position: absolute; left: -11px; top: -1px; width: 2px; height: 2px; background: #ddd; border-radius: 50%; }
.ta2 { top: 238px; background: #1e1e1e; color: #e6e6e6; padding: 3px 2px; line-height: 13px; white-space: nowrap; }
.wlist.low { margin-top: 239px; }

.graph { position: absolute; left: 6px; top: 5px; width: 79px; height: 27px; background: #222326; border-radius: 4px; display: flex; align-items: center; padding-left: 2px; }
.gicon { width: 22px; height: 23px; border-radius: 4px; background: #171717; display: flex; align-items: center; justify-content: center; }
.gicon svg { fill: none; stroke: #cfcfcf; stroke-width: 1; }
.gtxt { font-size: 9.600px; font-weight: 600; color: #e8e8e8; margin: 0 5px 0 9px; }

.topbars { position: absolute; top: 3px; right: 4px; display: flex; gap: 3px; z-index: 6; align-items: flex-start; }
.extbox { width: 81px; height: 32px; background: #161616; border: 1px solid #2d2d2d; border-radius: 7px; padding: 4px 5px; }
.extbtn { height: 22px; background: #242527; border-radius: 5px; display: flex; align-items: center; gap: 4px; padding-left: 5px; font-size: 8px; font-weight: 500; color: #eee; white-space: nowrap; }
.extbtn svg { fill: none; stroke: #d8d8d8; stroke-width: 1.100; }
.actions { width: 447px; height: 32px; background: #171717; border: 1px solid #333; border-radius: 7px; display: flex; align-items: center; padding-left: 12px; }
.ibtns { width: 60px; height: 24px; display: flex; background: #1d1d1d; border-radius: 4px; box-shadow: 0 0 0 1px #2c2c2c; }
.ib { flex: 1; display: flex; align-items: center; justify-content: center; }
.ib.wide { flex: none; width: 33px; border-right: 1px solid #333; }
.mgr { margin-left: 5px; width: 62px; height: 24px; background: #1f5a8a; border-radius: 3px 0 0 3px; display: flex; align-items: center; gap: 3px; padding-left: 6px; color: #f0f0f0; font-size: 8.500px; font-weight: 500; white-space: nowrap; }
.mgr-more { width: 89px; height: 24px; background: #646464; border-radius: 0 3px 3px 0; display: flex; align-items: center; justify-content: space-between; padding: 0 7px; }
.drag { margin: 0 7px; flex: none; }
.runwrap { width: 107px; height: 21px; background: #222326; border-radius: 6px; display: flex; align-items: center; position: relative; }
.qty { margin-left: 10px; font-size: 9.500px; font-weight: 600; color: #eee; }
.steppers { margin-left: 10px; display: flex; flex-direction: column; gap: 3px; }
.steppers svg { fill: none; stroke: #6f6f6f; stroke-width: 1; display: block; }
.run { position: absolute; left: 38px; top: 0; width: 53px; height: 21px; background: #0b83e8; border-radius: 6px; display: flex; align-items: center; justify-content: center; gap: 4px; color: #fff; font-size: 9.500px; font-weight: 500; }
.runchev { position: absolute; right: 5px; top: 7px; }
.xbtn { margin-left: 5px; width: 21px; height: 21px; background: #5c2424; border-radius: 5px; display: flex; align-items: center; justify-content: center; }
.active-n { margin-left: 6px; width: 51px; height: 21px; background: #222326; border-radius: 5px; color: #eee; font-size: 9.500px; font-weight: 500; display: flex; align-items: center; justify-content: center; white-space: nowrap; }

.queue { position: absolute; left: 744px; top: 38px; width: 232px; height: 163px; background: #171717; border: 1px solid #2d2d2d; border-radius: 6px; z-index: 5; }
.q-head { height: 31px; border-bottom: 1px solid #2b2b2b; display: flex; align-items: center; padding-left: 10px; position: relative; }
.q-title { font-size: 9px; font-weight: 500; color: #f0f0f0; }
.q-clear { position: absolute; left: 125px; font-size: 8px; color: #8a8a8a; white-space: nowrap; }
.q-red { position: absolute; left: 177px; top: 4px; width: 21px; height: 21px; border-radius: 5px; background: #5c2424; display: flex; align-items: center; justify-content: center; }
.q-more { position: absolute; left: 210px; top: 13px; }
.q-filter { height: 21px; margin: 11px 8px 0 8px; display: flex; align-items: center; }
.qf { font-size: 8px; color: #7f7f7f; margin-right: 13px; white-space: nowrap; }
.qf.on { width: 20px; height: 21px; margin-right: 8px; background: #252628; border-radius: 5px; color: #f0f0f0; font-weight: 600; display: flex; align-items: center; justify-content: center; }
.qspace { flex: 1; }
.qi { width: 21px; height: 21px; margin-left: 6px; border-radius: 5px; background: #232427; display: flex; align-items: center; justify-content: center; }
.qi svg { fill: none; stroke: #cfcfcf; stroke-width: 1; }
.q-day { margin: 10px 0 0 7px; font-size: 8px; line-height: 10px; color: #808080; }
.q-item { display: flex; align-items: center; margin: 9px 0 0 12px; height: 22px; }
.q-item + .q-item { margin-top: 10px; }
.q-thumb { width: 22px; height: 22px; background: #222326; border-radius: 3px; display: block; overflow: hidden; position: relative; flex: none; }
.q-thumb.alt { display: flex; align-items: center; justify-content: center; }
.broken { position: absolute; left: 0; top: 0; }
.faile { position: absolute; left: 0; top: 11px; font-size: 10.500px; line-height: 12px; font-weight: 500; color: #eee; white-space: nowrap; }
.q-txt { margin-left: 4px; display: flex; flex-direction: column; }
.q-txt b { font-size: 8px; line-height: 10px; font-weight: 500; color: #f0f0f0; }
.q-txt small { font-size: 8px; line-height: 10px; color: #7f7f7f; }

.ctl { position: absolute; left: 806px; top: 710px; width: 170px; height: 33px; background: #191919; border: 1px solid #2c2c2c; border-radius: 6px; display: flex; align-items: center; padding-left: 5px; z-index: 5; }
.ctl svg { fill: none; stroke: #c8c8c8; stroke-width: 1; flex: none; }
.ptr { width: 22px; height: 21px; border-radius: 5px; background: #2b2b2b; display: flex; align-items: center; justify-content: center; }
.ctl .c1 { margin-left: 3px; }
.ctl b { width: 1px; height: 18px; background: #333; margin: 0 8px; display: block; flex: none; }
.ctl .c2 { margin-left: -1px; }
.pct { margin: 0 3px 0 9px; font-size: 8px; font-weight: 600; color: #e8e8e8; }
.ctl .c3 { margin-left: -1px; }
.ctl .c4 { margin-left: 13px; }

/* right panel */
.panel { flex: 1; min-width: 0; background: #161616; border-left: 1px solid #2c2c2c; position: relative; padding: 0 11px; display: flex; flex-direction: column; }
.p-head { height: 38px; flex: none; display: flex; align-items: center; gap: 10px; padding-top: 1px; }
.p-head strong { font-size: 9.300px; font-weight: 600; color: #f0f0f0; white-space: nowrap; }
.p-toggle { position: absolute; right: 8px; top: 9px; width: 21px; height: 21px; background: #232427; border-radius: 5px; display: flex; align-items: center; justify-content: center; }
.p-tabs { height: 18px; flex: none; display: flex; align-items: center; margin-top: 1px; position: relative; font-size: 9.400px; }
.pt { color: #7f7f7f; white-space: nowrap; position: absolute; top: 3px; line-height: 12px; }
.pt.on { left: 0; top: 0; width: 50px; height: 18px; background: #232427; border-radius: 5px; color: #eee; display: flex; align-items: center; padding-left: 5px; gap: 3px; }
.p1 { left: 61px; } .p2 { left: 128px; } .p3 { left: 160px; }
.p-search { height: 22px; flex: none; width: 237px; margin-top: 8px; background: #26272a; border-radius: 5px; display: flex; align-items: center; gap: 5px; padding-left: 7px; font-size: 8px; color: #6f6f6f; }
.p-div { height: 1px; flex: none; margin: 10px -11px 0; background: #2c2c2c; }
.p-err { color: #e04040; font-size: 9.400px; font-weight: 500; line-height: 12px; white-space: nowrap; flex: none; }
.p-err.a { margin-top: 9px; }
.p-nodename { margin-top: 15px; height: 12px; flex: none; display: flex; align-items: center; justify-content: space-between; font-size: 9.400px; color: #808080; padding-right: 5px; }
.p-err.b { margin: 12px 0 0 1px; display: flex; gap: 0; }
.caret { width: 2px; height: 11px; background: #2c4c74; margin: 0 1px; display: block; }
.p-msg { margin: 10px 0 0 1px; font-size: 9.350px; line-height: 12px; color: #e8e8e8; white-space: nowrap; flex: none; }
.p-code { margin: 9px 0 0; width: 237px; height: 431px; flex: none; background: #2a2b2f; border-radius: 6px; overflow: hidden; padding: 20.500px 0 0 7px; font-family: "DejaVu Sans Mono", monospace; font-size: 8px; line-height: 13px; color: #9b9b9b; white-space: pre; }
.p-btns { display: flex; gap: 5px; margin-top: 7px; flex: none; width: 237px; }
.pb { height: 22px; background: #222326; border-radius: 5px; display: flex; align-items: center; justify-content: center; gap: 3px; font-size: 8px; font-weight: 500; color: #ececec; white-space: nowrap; flex: none; }
.pb.grow { width: 155px; }
.pb.copy { width: 77px; }
.pb.help { width: 237px; height: 21px; margin-top: 5px; }
.p-div.low { margin-top: 8px; }
.p-foot { margin-top: 12px; font-size: 9.400px; line-height: 14px; color: #8a8a8a; white-space: nowrap; }
.u1 { margin-left: 4px; }
.or { margin-left: 4px; }
.u2 { margin-left: 4px; }
</style>
